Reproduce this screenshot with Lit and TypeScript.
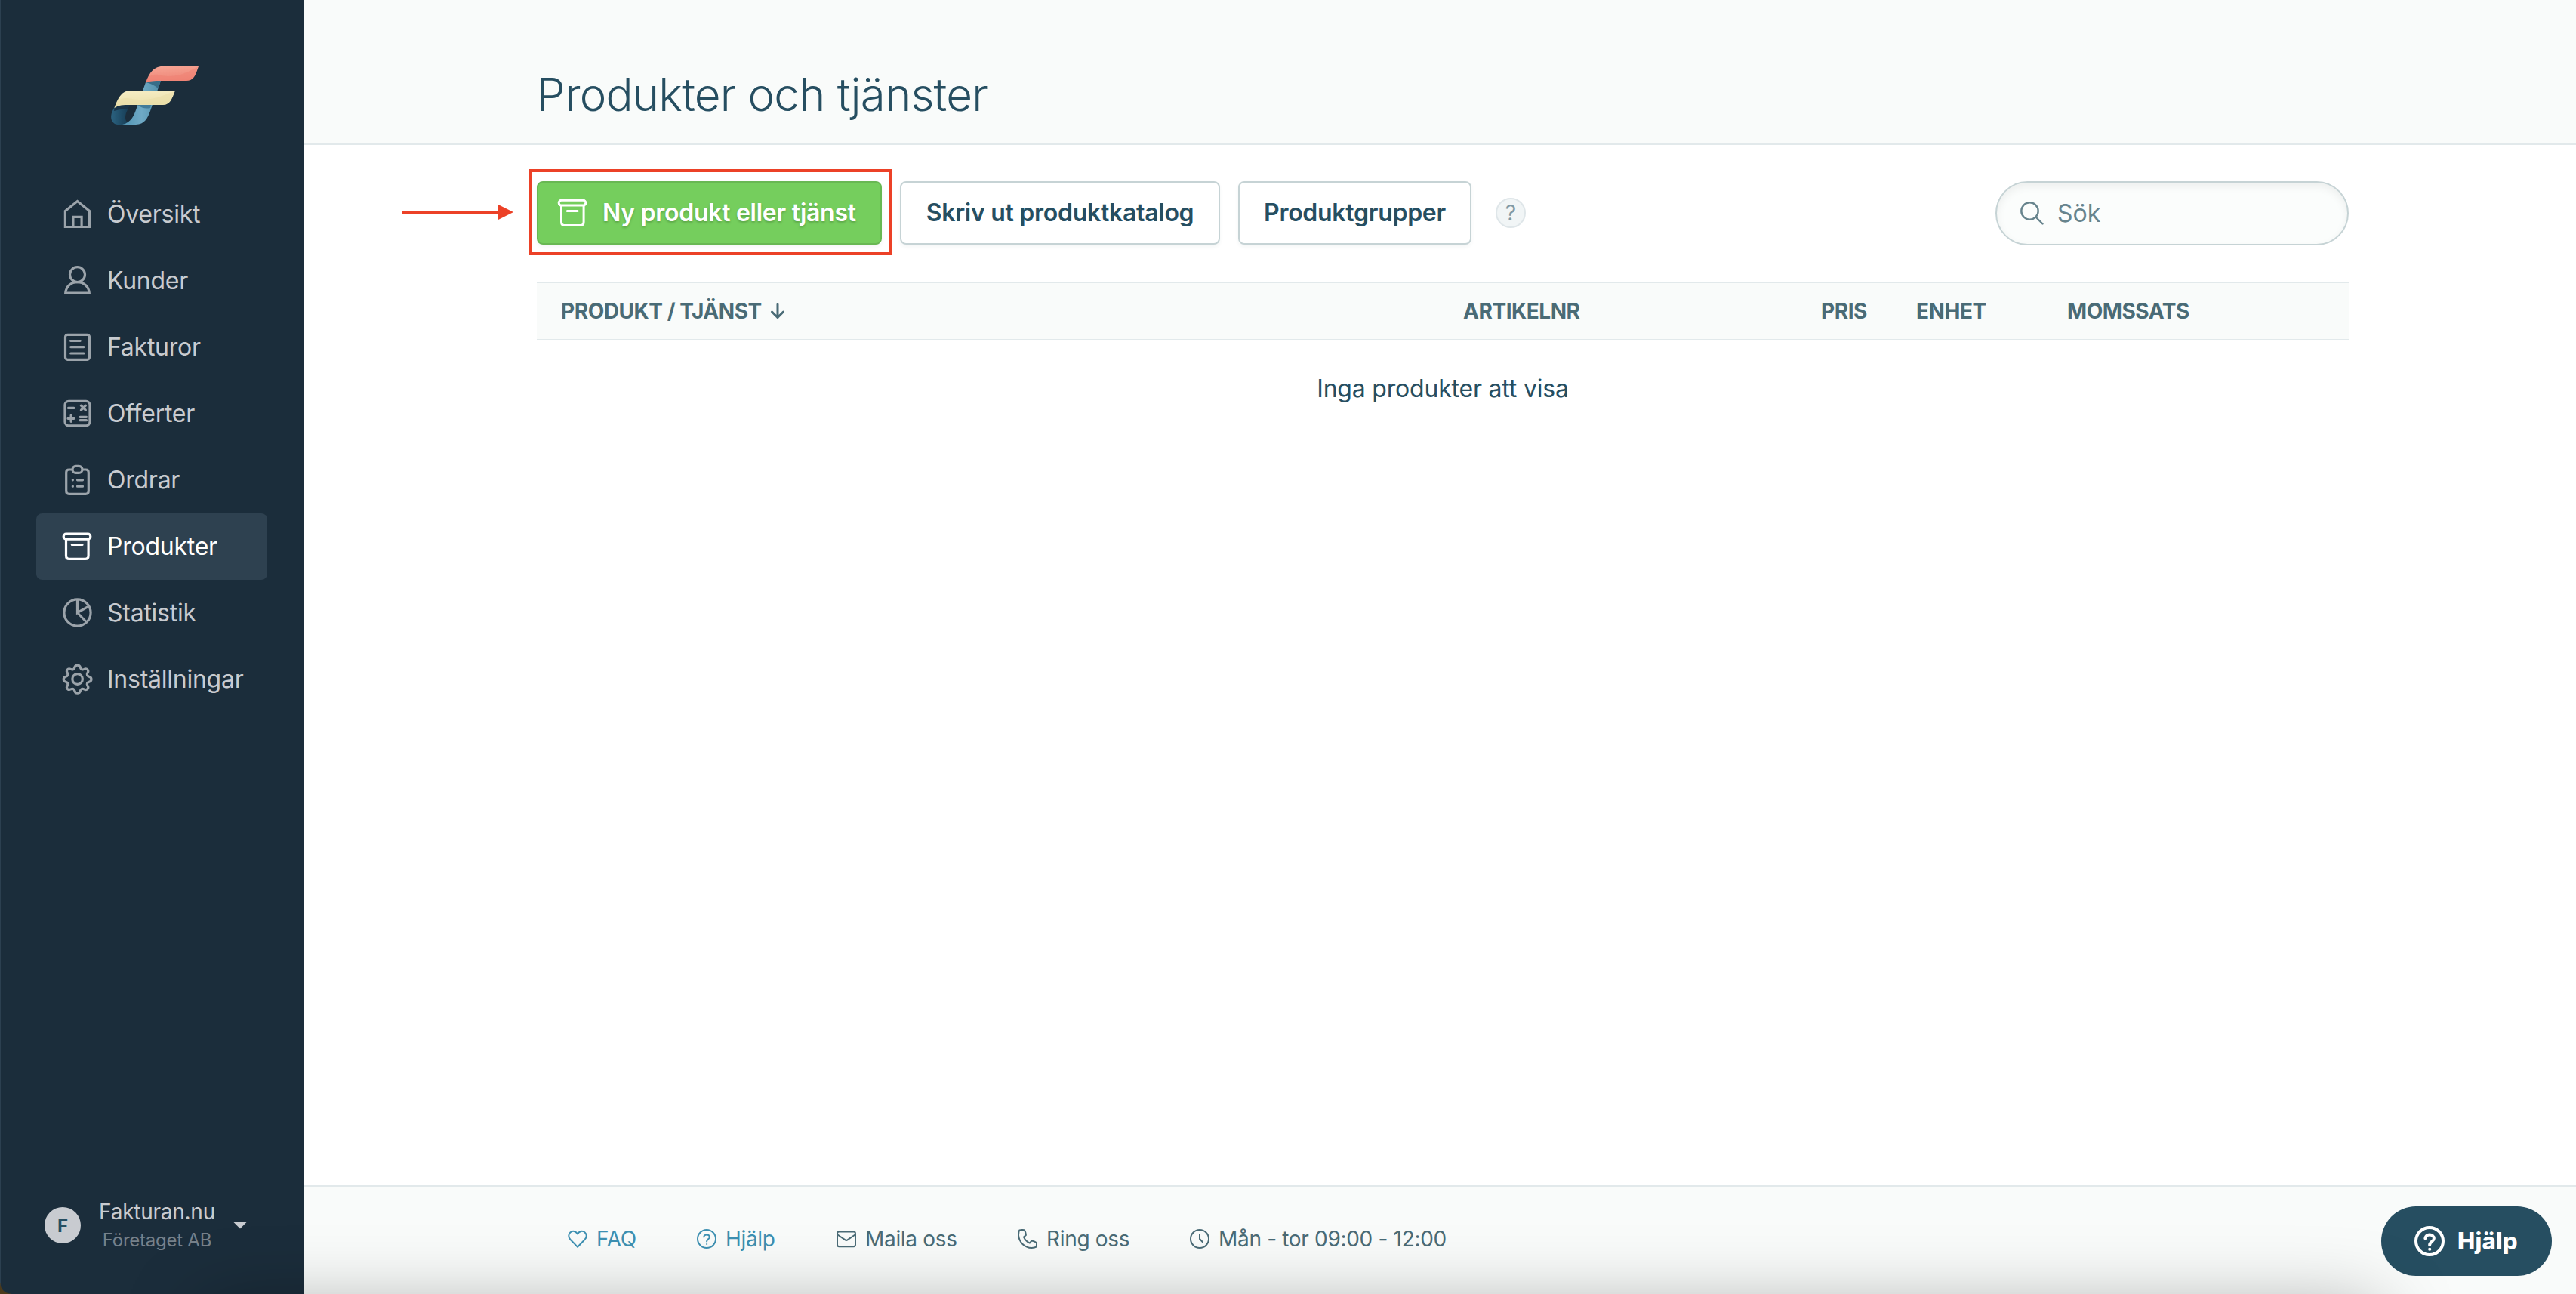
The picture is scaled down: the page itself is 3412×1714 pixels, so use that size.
import { LitElement, html, css, svg } from "lit";
import { customElement } from "lit/decorators.js";

const icons: Record<string, unknown> = {
  home: svg`<path d="M4.400 16.500 20.500 3.500 36.600 16.500V37.500H4.400Z M14.900 37.500V24.300H26.100V37.500"/>`,
  user: svg`<circle cx="20.500" cy="12.600" r="10"/><path d="M4.700 37.200C5.500 28 12 22.600 20.500 22.600S35.500 28 36.300 37.200Z"/>`,
  invoice: svg`<rect x="4.500" y="4.300" width="32" height="33" rx="3"/><path stroke-linecap="round" d="M11.700 12.500H24 M11.700 20.600H29 M11.700 29H29"/>`,
  calc: svg`<rect x="4" y="4.300" width="33" height="32.500" rx="5"/><path stroke-linecap="round" d="M8.500 13.400H16 M25.400 10.200 31.400 16.200M31.400 10.200 25.400 16.200 M8 27.300H16M12.100 23.200V31.300 M24 25.300H32.500M24 29.700H32.500"/>`,
  clipboard: svg`<path d="M14 7H9.500Q5.700 7 5.700 10.800V35.500Q5.700 39.300 9.500 39.300H31.500Q35.300 39.300 35.300 35.500V10.800Q35.300 7 31.500 7H27"/><rect x="14" y="2.400" width="13" height="9" rx="4.500"/><path stroke-linecap="round" d="M14.300 20.800H14.400M20.500 20.800H27.500 M14.300 29.200H14.400M20.500 29.200H27.500"/>`,
  box: svg`<rect x="2.200" y="4.200" width="35.600" height="6.900" rx="3.400"/><path stroke-linecap="round" d="M5.500 11.500V33Q5.500 37.400 9.500 37.400H31Q35.100 37.400 35.100 33V11.500 M13.300 18.500H27"/>`,
  pie: svg`<circle cx="20.500" cy="20.500" r="17.600"/><path d="M20.500 3V20.500L35 12.300M20.500 20.500 32.600 33"/>`,
  gear: svg`<circle cx="20.600" cy="20.500" r="6.800"/><path stroke-linejoin="round" d="M16.800 5.400Q17.400 2.100 20.600 2.100T24.400 5.400Q25.800 9.200 29.500 7.400Q32.200 6 34 8T33.700 12.700Q32.300 16 36 17.200Q39 18 39 20.700T36 24.200Q32.200 25.400 33.700 28.700Q35.800 31.300 34 33.400T29.500 33.900Q25.700 32.200 24.400 35.900Q23.800 39.200 20.600 39.200T16.800 35.900Q15.500 32.200 11.700 33.900Q8.900 35.300 7.200 33.400T7.500 28.700Q9 25.400 5.200 24.200Q2.200 23.400 2.200 20.700T5.200 17.200Q8.900 16 7.500 12.700Q5.500 10 7.200 8T11.700 7.400Q15.400 9.200 16.800 5.400Z"/>`,
};

const nav: [string, string][] = [
  ["home", "Översikt"],
  ["user", "Kunder"],
  ["invoice", "Fakturor"],
  ["calc", "Offerter"],
  ["clipboard", "Ordrar"],
  ["box", "Produkter"],
  ["pie", "Statistik"],
  ["gear", "Inställningar"],
];

const questionMark = svg`<path stroke-linecap="round" d="M9.300 10.600C9.300 6.500 16.800 6.500 16.800 10.700C16.800 13.400 13.100 13.400 13.100 16.400"/><path stroke-linecap="round" d="M13.100 20H13.200"/>`;

const links: { cls: string; label: string; icon: unknown }[] = [
  { cls: "faq", label: "FAQ", icon: svg`<path stroke-linejoin="round" d="M13 23.700 3.300 13.700C.3 10.400 1 6.400 3.300 4.400C6.300 1.800 10.600 2.500 13 6.400C15.400 2.500 19.700 1.800 22.700 4.400C25 6.400 25.700 10.400 22.700 13.700Z"/>` },
  { cls: "hjalp", label: "Hjälp", icon: svg`<circle cx="13" cy="13" r="12"/>${questionMark}` },
  { cls: "mail", label: "Maila oss", icon: svg`<rect x="1" y="3.600" width="24" height="19.600" rx="2.400"/><path d="M1.500 7.500 11.500 14.400Q13 15.400 14.500 14.400L24.500 7.500"/>` },
  { cls: "phone", label: "Ring oss", icon: svg`<path stroke-linejoin="round" d="M2.200 1.400Q1 3.500 1 8C1.800 17.500 9 24.600 18.500 25Q22.500 25 24.600 23.700Q25.200 21.500 25 18.300Q23 16.300 18.500 15.400L15.800 18.600Q10.400 16 8 10.600L10.900 8Q10.500 3 8.600 1.200Q5.500.7 2.200 1.400Z"/>` },
  { cls: "clock", label: "Mån - tor 09:00 - 12:00", icon: svg`<circle cx="13" cy="13" r="12"/><path stroke-linecap="round" d="M13 7.200V13L17 17.200"/>` },
];

@customElement("app-root")
export class AppRoot extends LitElement {
  static styles = css`
    :host { display: block; font-family: Inter, "Liberation Sans", sans-serif; color: #264e61; }
    * { box-sizing: border-box; }
    svg { display: block; flex: none; fill: none; stroke: currentColor; }
    .page { position: relative; display: flex; width: 3412px; height: 1714px; overflow: hidden; background: #fff; }
    .side { width: 402px; background: #1b2d3b; border-left: 1px solid #2c4050; display: flex; flex-direction: column; color: #c8cbd0; }
    .logo { width: 120px; height: 84px; margin: 84px 0 0 144px; stroke: none; }
    .nav { display: flex; flex-direction: column; padding: 72px 48px 0 47px; }
    .item { display: flex; align-items: center; height: 88px; padding-left: 34px; gap: 18px; font-size: 32px; font-weight: 400; letter-spacing: -0.250px; border-radius: 8px; }
    .item span { padding-bottom: 1px; }
    .item svg { width: 42px; height: 42px; stroke-width: 3.2; color: #9ba3aa; }
    .item.on { background: #2e4150; color: #fff; }
    .item.on svg { color: #fff; }
    .account { display: flex; align-items: center; margin-top: auto; height: 92px; margin-bottom: 45px; padding-left: 58px; }
    .avatar { width: 48px; height: 48px; border-radius: 50%; background: #c8cbd0; color: #264e61; font-weight: 700; font-size: 24px; display: grid; place-items: center; }
    .who { width: 152px; margin-left: 25px; padding-top: 2px; display: flex; flex-direction: column; align-items: center; white-space: nowrap; }
    .name { font-size: 28px; line-height: 38px; font-weight: 400; letter-spacing: -0.250px; }
    .org { font-size: 24px; line-height: 38px; color: #76818b; font-weight: 400; letter-spacing: -0.250px; }
    .caret { width: 18px; height: 9px; margin-left: 25px; background: #c8cbd0; clip-path: polygon(0 0, 100% 0, 50% 100%); }
    .main { flex: 1; display: flex; flex-direction: column; min-width: 0; }
    .head { height: 192px; border-bottom: 2px solid #e2e9eb; background: #f9fbfa; padding: 89px 0 0 309px; }
    h1 { margin: 0; font-size: 60px; line-height: 72px; font-weight: 300; letter-spacing: -0.800px; white-space: nowrap; }
    .body { flex: 1; padding: 48px 301px 0 309px; }
    .tools { display: flex; align-items: center; height: 85px; }
    .btn { height: 84px; border: 2px solid #c6d3d5; border-radius: 8px; background: #fff; display: flex; align-items: center; justify-content: center; font-size: 32px; font-weight: 600; letter-spacing: -0.280px; white-space: nowrap; box-shadow: 0 3px 5px rgba(30,70,80,.05); margin: 0 24px 1px 0; }
    .btn span { padding-bottom: 2px; }
    .new { width: 457px; background: #75ce5d; border-color: #68b853; color: #fff; justify-content: flex-start; padding-left: 25px; gap: 20px; text-shadow: 0 2px 3px rgba(40,90,30,.35); }
    .new svg { width: 40px; height: 42px; stroke-width: 3; }
    .print { width: 424px; }
    .groups { width: 309px; }
    .tip { width: 40px; height: 40px; margin: 0 0 1px 8px; border-radius: 50%; border: 2px solid #dfe6e9; background: #f1f5f6; color: #8199a5; display: grid; place-items: center; font-size: 28px; font-weight: 400; }
    .search { width: 468px; height: 85px; margin-left: auto; border: 2px solid #c6d3d5; border-radius: 43px; background: #fbfdfc; box-shadow: inset 0 5px 12px rgba(0,0,0,.06); display: flex; align-items: center; padding-left: 31px; gap: 18px; font-size: 32px; color: #67848d; }
    .search svg { width: 31px; height: 31px; stroke-width: 2.400; }
    .thead { display: grid; grid-template-columns: 1195px 474px 126px 200px 1fr; align-items: center; margin-top: 48px; height: 78px; padding-left: 32px; background: #f9fbfa; border-top: 2px solid #e2e9eb; border-bottom: 2px solid #e2e9eb; font-size: 28px; font-weight: 700; letter-spacing: -0.450px; color: #4a6b76; }
    .first { display: flex; align-items: center; gap: 11px; }
    .first svg { width: 20px; height: 24px; stroke-width: 3; }
    .empty { margin-top: 44px; text-align: center; font-size: 32px; line-height: 40px; letter-spacing: -0.200px; }
    .foot { height: 144px; border-top: 2px solid #e2e9eb; background: #f9fbfa; display: flex; padding: 49px 0 0 350px; color: #4a6b76; }
    .link { display: flex; align-items: center; gap: 12px; height: 40px; font-size: 28px; letter-spacing: -0.320px; white-space: nowrap; }
    .link svg { width: 26px; height: 26px; stroke-width: 2; }
    .faq { width: 171px; color: #3d90b2; }
    .hjalp { width: 185px; color: #3d90b2; }
    .mail { width: 240px; }
    .phone { width: 228px; }
    .frame { position: absolute; left: 701px; top: 224px; width: 480px; height: 114px; border: 4px solid #ec4127; }
    .arrow { position: absolute; left: 532px; top: 271px; width: 148px; height: 20px; stroke: none; fill: #ec4127; }
    .help { position: absolute; left: 3154px; top: 1598px; width: 226px; height: 92px; border-radius: 46px; background: #264e61; color: #fff; display: flex; align-items: center; padding-left: 44px; gap: 17px; font-size: 31px; font-weight: 800; letter-spacing: 0.200px; }
    .help span { padding-bottom: 2px; }
    .help svg { width: 40px; height: 40px; stroke-width: 2.600; }
    .shade { position: absolute; left: 280px; top: 1744px; width: 2860px; height: 80px; box-shadow: 0 0 100px 10px rgba(0,0,0,.34); }
    .corner { position: absolute; left: 0; top: 1700px; width: 14px; height: 14px; background: radial-gradient(circle at 100% 0, transparent 13px, #4b3a1c 14px); }
  `;

  render() {
    return html`
      <div class="page">
        <aside class="side">
          <svg class="logo" viewBox="25 14 120 84" aria-hidden="true">
            <defs>
              <linearGradient id="r" x1="0" y1="0" x2="0.2" y2="1"><stop offset="0" stop-color="#f6a695"/><stop offset="1" stop-color="#ee8274"/></linearGradient>
              <linearGradient id="y" x1="0" y1="0" x2="0.2" y2="1"><stop offset="0" stop-color="#f7eec6"/><stop offset="1" stop-color="#eadfa9"/></linearGradient>
              <linearGradient id="b" x1="0" y1="0" x2="1" y2="0"><stop offset="0" stop-color="#4f93b2"/><stop offset=".5" stop-color="#6fa9c5"/><stop offset="1" stop-color="#4f8faa"/></linearGradient>
              <linearGradient id="d" x1="0" y1="0" x2="1" y2="0"><stop offset="0" stop-color="#2b6280"/><stop offset="1" stop-color="#153a52"/></linearGradient>
            </defs>
            <path fill="url(#d)" d="M32 71Q40 68 52 68C49 76 46 80 46 86Q46 91 50 92L44 95H36C26 94 26 83 29 77Z"/>
            <path fill="#1a3448" d="M32 71Q40 68 52 68L49 75Q40 74 31 77Z"/>
            <path fill="url(#b)" d="M73 39Q83 36 93 37L79 77C76 86 71 95 60 95H42C54 92 57 84 61 73Z"/>
            <path fill="#366d88" d="M73 39Q83 36 93 37L89.500 47Q82 41 73 39Z"/>
            <path fill="#427b99" d="M62 69H80L79 73Q70 75 62 69Z"/>
            <path fill="url(#r)" d="M73 40C77 28 83 18 95 18H143C139 29 137 37 127 37H93C84 37 78 37 73 40Z"/>
            <path fill="#f07f72" fill-opacity=".5" d="M76 33C86 24 92 32 107 31C122 30 130 24 142 19C138 29 137 36 127 36H90C83 36 78 37 73 40Z"/>
            <path fill="url(#y)" d="M31.500 73C36 60 41 50 53 50H112C108 61 105 69 96 69H52C43 69 37 69 31.500 73Z"/>
            <path fill="#e8dba3" fill-opacity=".45" d="M35 65C45 55 52 63 70 62C88 61 99 55 111 51C107 61 105 68 96 68H50C43 68 37 69 31.500 73Z"/>
          </svg>
          <nav class="nav">
            ${nav.map(([icon, label]) => html`
              <div class="item ${icon === "box" ? "on" : ""}">
                <svg viewBox="0 0 42 42">${icons[icon]}</svg><span>${label}</span>
              </div>`)}
          </nav>
          <div class="account">
            <div class="avatar">F</div>
            <div class="who"><span class="name">Fakturan.nu</span><span class="org">Företaget AB</span></div>
            <div class="caret"></div>
          </div>
        </aside>
        <main class="main">
          <header class="head"><h1>Produkter och tjänster</h1></header>
          <section class="body">
            <div class="tools">
              <div class="btn new"><svg viewBox="0 0 40 42">${icons.box}</svg><span>Ny produkt eller tjänst</span></div>
              <div class="btn print"><span>Skriv ut produktkatalog</span></div>
              <div class="btn groups"><span>Produktgrupper</span></div>
              <div class="tip">?</div>
              <div class="search">
                <svg viewBox="0 0 31 31"><circle cx="12.500" cy="12.500" r="11.200"/><path stroke-linecap="round" d="M20.500 20.500 29.500 29.500"/></svg>
                <span>Sök</span>
              </div>
            </div>
            <div class="thead">
              <div class="first"><span>PRODUKT / TJÄNST</span><svg viewBox="0 0 20 24"><path stroke-linecap="round" stroke-linejoin="round" d="M10 3V20.500M2.500 13 10 20.500 17.500 13"/></svg></div>
              <div>ARTIKELNR</div><div>PRIS</div><div>ENHET</div><div>MOMSSATS</div>
            </div>
            <div class="empty">Inga produkter att visa</div>
          </section>
          <footer class="foot">
            ${links.map((l) => html`<div class="link ${l.cls}"><svg viewBox="0 0 26 26">${l.icon}</svg><span>${l.label}</span></div>`)}
          </footer>
        </main>
        <div class="frame"></div>
        <svg class="arrow" viewBox="0 0 148 20"><path d="M0 8H128V0L148 10 128 20V12H0Z"/></svg>
        <div class="help"><svg viewBox="0 0 26 26"><circle cx="13" cy="13" r="11.700"/>${questionMark}</svg><span>Hjälp</span></div>
        <div class="shade"></div>
        <div class="corner"></div>
      </div>`;
  }
}
